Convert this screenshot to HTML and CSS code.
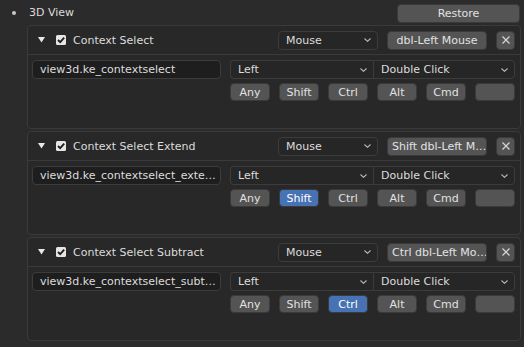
FILE: index.html
```html
<!DOCTYPE html>
<html lang="en">
<head>
    <meta charset="UTF-8">
    <meta name="viewport" content="width=device-width, initial-scale=1.0">
    <title>Keymap - 3D View</title>
    <link rel="stylesheet" href="styles.css">
</head>
<body>
    <div class="top-row">
        <span class="bullet"></span>
        <span class="section-name">3D View</span>
        <button class="btn restore">Restore</button>
    </div>

    <div class="box">
        <div class="box-head">
            <svg class="arrow" width="7" height="6" viewBox="0 0 7 6"><polygon points="0,0 7,0 3.5,5.5" fill="#e8e8e8"/></svg>
            <svg class="check" width="10" height="10" viewBox="0 0 10 10"><rect width="10" height="10" rx="1.5" fill="#e6e6e6"/><polyline points="2,5 4.2,7.2 8.2,2.6" fill="none" stroke="#1e1e1e" stroke-width="1.8"/></svg>
            <span class="item-name">Context Select</span>
            <div class="select mouse">Mouse<svg class="chev" width="7" height="4" viewBox="0 0 7 4"><polyline points="0.5,0.5 3.5,3.3 6.5,0.5" fill="none" stroke="#bbb" stroke-width="1.1"/></svg></div>
            <button class="btn key">dbl-Left Mouse</button>
            <button class="btn remove"><svg width="10" height="10" viewBox="0 0 10 10"><path d="M1.5 1.5L8.5 8.5M8.5 1.5L1.5 8.5" stroke="#d6d6d6" stroke-width="1.2"/></svg></button>
        </div>
        <div class="box-body">
            <div class="field">view3d.ke_contextselect</div>
            <div class="right-col">
                <div class="select-pair">
                    <div class="select left-half">Left<svg class="chev" width="7" height="4" viewBox="0 0 7 4"><polyline points="0.5,0.5 3.5,3.3 6.5,0.5" fill="none" stroke="#bbb" stroke-width="1.1"/></svg></div>
                    <div class="select right-half">Double Click<svg class="chev" width="7" height="4" viewBox="0 0 7 4"><polyline points="0.5,0.5 3.5,3.3 6.5,0.5" fill="none" stroke="#bbb" stroke-width="1.1"/></svg></div>
                </div>
                <div class="mods">
                    <button class="btn mod">Any</button>
                    <button class="btn mod">Shift</button>
                    <button class="btn mod">Ctrl</button>
                    <button class="btn mod">Alt</button>
                    <button class="btn mod">Cmd</button>
                    <button class="btn mod"></button>
                </div>
            </div>
        </div>
    </div>

    <div class="box">
        <div class="box-head">
            <svg class="arrow" width="7" height="6" viewBox="0 0 7 6"><polygon points="0,0 7,0 3.5,5.5" fill="#e8e8e8"/></svg>
            <svg class="check" width="10" height="10" viewBox="0 0 10 10"><rect width="10" height="10" rx="1.5" fill="#e6e6e6"/><polyline points="2,5 4.2,7.2 8.2,2.6" fill="none" stroke="#1e1e1e" stroke-width="1.8"/></svg>
            <span class="item-name">Context Select Extend</span>
            <div class="select mouse">Mouse<svg class="chev" width="7" height="4" viewBox="0 0 7 4"><polyline points="0.5,0.5 3.5,3.3 6.5,0.5" fill="none" stroke="#bbb" stroke-width="1.1"/></svg></div>
            <button class="btn key">Shift dbl-Left M…</button>
            <button class="btn remove"><svg width="10" height="10" viewBox="0 0 10 10"><path d="M1.5 1.5L8.5 8.5M8.5 1.5L1.5 8.5" stroke="#d6d6d6" stroke-width="1.2"/></svg></button>
        </div>
        <div class="box-body">
            <div class="field">view3d.ke_contextselect_exte…</div>
            <div class="right-col">
                <div class="select-pair">
                    <div class="select left-half">Left<svg class="chev" width="7" height="4" viewBox="0 0 7 4"><polyline points="0.5,0.5 3.5,3.3 6.5,0.5" fill="none" stroke="#bbb" stroke-width="1.1"/></svg></div>
                    <div class="select right-half">Double Click<svg class="chev" width="7" height="4" viewBox="0 0 7 4"><polyline points="0.5,0.5 3.5,3.3 6.5,0.5" fill="none" stroke="#bbb" stroke-width="1.1"/></svg></div>
                </div>
                <div class="mods">
                    <button class="btn mod">Any</button>
                    <button class="btn mod on">Shift</button>
                    <button class="btn mod">Ctrl</button>
                    <button class="btn mod">Alt</button>
                    <button class="btn mod">Cmd</button>
                    <button class="btn mod"></button>
                </div>
            </div>
        </div>
    </div>

    <div class="box">
        <div class="box-head">
            <svg class="arrow" width="7" height="6" viewBox="0 0 7 6"><polygon points="0,0 7,0 3.5,5.5" fill="#e8e8e8"/></svg>
            <svg class="check" width="10" height="10" viewBox="0 0 10 10"><rect width="10" height="10" rx="1.5" fill="#e6e6e6"/><polyline points="2,5 4.2,7.2 8.2,2.6" fill="none" stroke="#1e1e1e" stroke-width="1.8"/></svg>
            <span class="item-name">Context Select Subtract</span>
            <div class="select mouse">Mouse<svg class="chev" width="7" height="4" viewBox="0 0 7 4"><polyline points="0.5,0.5 3.5,3.3 6.5,0.5" fill="none" stroke="#bbb" stroke-width="1.1"/></svg></div>
            <button class="btn key">Ctrl dbl-Left Mo…</button>
            <button class="btn remove"><svg width="10" height="10" viewBox="0 0 10 10"><path d="M1.5 1.5L8.5 8.5M8.5 1.5L1.5 8.5" stroke="#d6d6d6" stroke-width="1.2"/></svg></button>
        </div>
        <div class="box-body">
            <div class="field">view3d.ke_contextselect_subt…</div>
            <div class="right-col">
                <div class="select-pair">
                    <div class="select left-half">Left<svg class="chev" width="7" height="4" viewBox="0 0 7 4"><polyline points="0.5,0.5 3.5,3.3 6.5,0.5" fill="none" stroke="#bbb" stroke-width="1.1"/></svg></div>
                    <div class="select right-half">Double Click<svg class="chev" width="7" height="4" viewBox="0 0 7 4"><polyline points="0.5,0.5 3.5,3.3 6.5,0.5" fill="none" stroke="#bbb" stroke-width="1.1"/></svg></div>
                </div>
                <div class="mods">
                    <button class="btn mod">Any</button>
                    <button class="btn mod">Shift</button>
                    <button class="btn mod on">Ctrl</button>
                    <button class="btn mod">Alt</button>
                    <button class="btn mod">Cmd</button>
                    <button class="btn mod"></button>
                </div>
            </div>
        </div>
    </div>
</body>
</html>
```

FILE: styles.css
```css
body {
    margin: 0;
    background: #2b2b2b;
    color: #dcdcdc;
    font-family: "DejaVu Sans", sans-serif;
    font-size: 11px;
    width: 524px;
    height: 347px;
    overflow: hidden;
}
.top-row {
    height: 25px;
    display: flex;
    align-items: center;
}
.bullet {
    width: 4px;
    height: 4px;
    border-radius: 50%;
    background: #c8c8c8;
    margin-left: 12px;
}
.section-name {
    margin-left: 13px;
}
.btn {
    font-family: inherit;
    font-size: 11px;
    color: #e2e2e2;
    background: #545454;
    border: 1px solid #3a3a3a;
    border-radius: 4px;
    padding: 0;
    height: 19px;
    box-sizing: border-box;
    white-space: nowrap;
    overflow: hidden;
}
.restore {
    width: 123px;
    margin-left: auto;
    margin-right: 4px;
    margin-top: 1px;
}
.box {
    background: #282828;
    border: 1px solid #3a3a3a;
    border-radius: 4px;
    margin: 0 3px 2px 27px;
}
.box-head {
    height: 28px;
    display: flex;
    align-items: center;
    padding: 0 5px 0 10px;
    border-bottom: 1px solid #3a3a3a;
}
.check {
    margin-left: 11px;
}
.item-name {
    margin-left: 7px;
    flex: 1;
}
.select {
    height: 19px;
    box-sizing: border-box;
    background: #262626;
    border: 1px solid #3c3c3c;
    border-radius: 4px;
    display: flex;
    align-items: center;
    justify-content: space-between;
    padding: 0 6px 0 7px;
    color: #dcdcdc;
}
.mouse {
    width: 100px;
}
.key {
    width: 100px;
    margin-left: 9px;
    padding: 0 4px;
}
.remove {
    width: 19px;
    margin-left: 9px;
    display: flex;
    align-items: center;
    justify-content: center;
}
.box-body {
    display: flex;
    gap: 9px;
    padding: 5px 5px 27px 4px;
}
.field {
    width: 189px;
    height: 19px;
    box-sizing: border-box;
    background: #1e1e1e;
    border: 1px solid #3c3c3c;
    border-radius: 4px;
    padding: 0 7px;
    line-height: 17px;
    white-space: nowrap;
    overflow: hidden;
}
.right-col {
    width: 285px;
    display: flex;
    flex-direction: column;
    gap: 4px;
}
.select-pair {
    display: flex;
}
.left-half {
    width: 143px;
    border-radius: 4px 0 0 4px;
    border-right: none;
}
.right-half {
    flex: 1;
    border-radius: 0 4px 4px 0;
}
.mods {
    display: flex;
    gap: 9px;
}
.mod {
    width: 40px;
    height: 18px;
}
.mod.on {
    background: #4772b3;
    color: #fff;
}
```
